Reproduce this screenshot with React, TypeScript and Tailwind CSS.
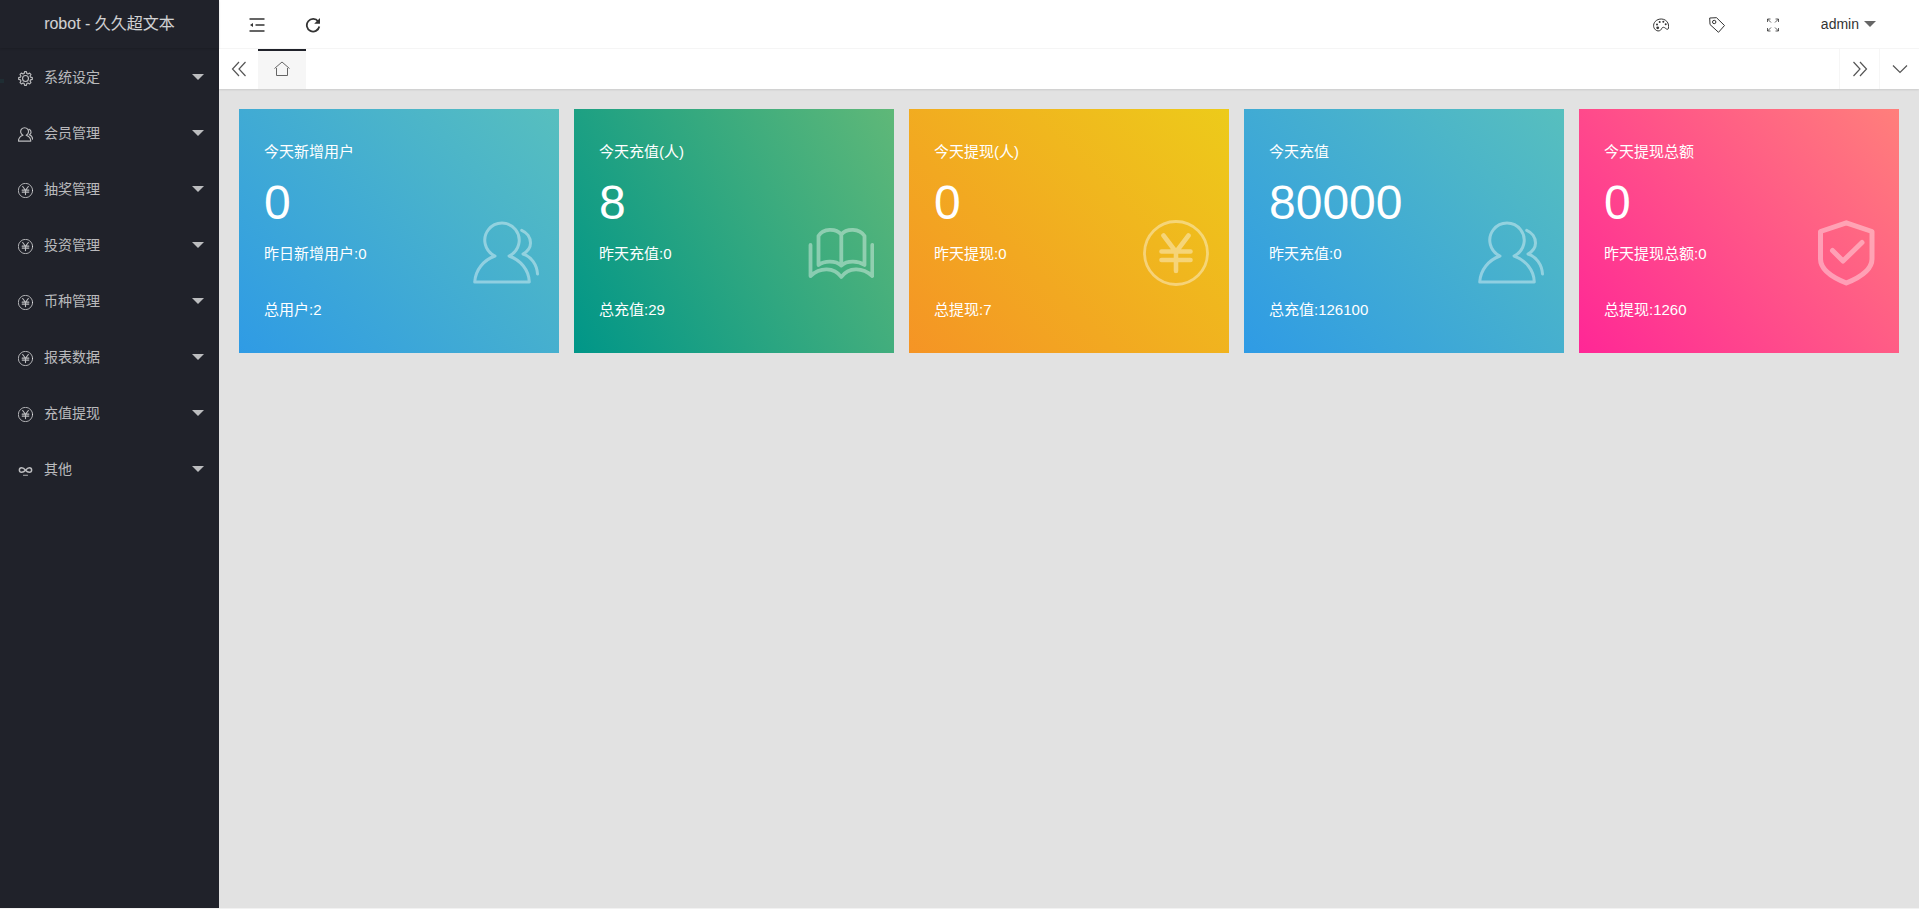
import { useState } from "react";
import type { ReactNode } from "react";

type IconName = "gear" | "users" | "yen" | "link" | "book" | "shield";

interface MenuItem {
  title: string;
  icon: IconName;
}

interface StatCard {
  title: string;
  value: string;
  previous: string;
  total: string;
  icon: IconName;
  gradient: string;
}

const menu: MenuItem[] = [
  { title: "系统设定", icon: "gear" },
  { title: "会员管理", icon: "users" },
  { title: "抽奖管理", icon: "yen" },
  { title: "投资管理", icon: "yen" },
  { title: "币种管理", icon: "yen" },
  { title: "报表数据", icon: "yen" },
  { title: "充值提现", icon: "yen" },
  { title: "其他", icon: "link" },
];

const cards: StatCard[] = [
  {
    title: "今天新增用户",
    value: "0",
    previous: "昨日新增用户:0",
    total: "总用户:2",
    icon: "users",
    gradient: "bg-[linear-gradient(45deg,#2f9be5,#57bfbe)]",
  },
  {
    title: "今天充值(人)",
    value: "8",
    previous: "昨天充值:0",
    total: "总充值:29",
    icon: "book",
    gradient: "bg-[linear-gradient(60deg,#009688,#5fb878)]",
  },
  {
    title: "今天提现(人)",
    value: "0",
    previous: "昨天提现:0",
    total: "总提现:7",
    icon: "yen",
    gradient: "bg-[linear-gradient(45deg,#f59425,#edcb1a)]",
  },
  {
    title: "今天充值",
    value: "80000",
    previous: "昨天充值:0",
    total: "总充值:126100",
    icon: "users",
    gradient: "bg-[linear-gradient(45deg,#2f9be5,#57bfbe)]",
  },
  {
    title: "今天提现总额",
    value: "0",
    previous: "昨天提现总额:0",
    total: "总提现:1260",
    icon: "shield",
    gradient: "bg-[linear-gradient(50deg,#ff2796,#ff7f7b)]",
  },
];

// All of these are drawn on a 66x66 grid
const shapes: Record<IconName, ReactNode> = {
  users: (
    <g strokeWidth="3">
      <path d="M22 36A17.200 17.200 0 1 1 36 36C47.500 40 56 50 56.300 62H1.700C2.500 50 10.500 40 22 36Z" />
      <path d="M48.700 10.300C54 12.500 57.500 17.500 57.500 23C57.500 27.500 54.500 31.500 50 34C58 36.500 64 44.500 64.500 54" />
    </g>
  ),
  book: (
    <g strokeWidth="3.800">
      <path d="M2.500 25V56C12 47 26 47 33.300 57C40.500 47 54.500 47 64.300 56V25" />
      <path d="M33.300 14.500C28 8 15 8 10.500 16V45C16 41 27 40 33.300 45.500C39.500 40 50.500 41 56.500 45V16C51.500 8 38.500 8 33.300 14.500V45" />
    </g>
  ),
  yen: (
    <>
      <circle cx="33" cy="33" r="31.500" strokeWidth="2.800" />
      <path d="M20.500 15.500L33 32L45.500 15.500M33 32V51M18.500 31.500H47.500M18.500 40H47.500" strokeWidth="4.600" />
    </>
  ),
  shield: (
    <g strokeWidth="5">
      <path d="M33.300 2.800L59 11.500V39C59 50 47 57.500 33.300 63C19.500 57.500 7.500 50 7.500 39V11.500Z" />
      <path d="M19.500 30.500L30 41L49 22.500" />
    </g>
  ),
  gear: (
    <g strokeWidth="5">
      <path d="M27 11L29 3H37L39 11L44 13L51 9L57 15L53 22L55 27L63 29V37L55 39L53 44L57 51L51 57L44 53L39 55L37 63H29L27 55L22 53L15 57L9 51L13 44L11 39L3 37V29L11 27L13 22L9 15L15 9L22 13Z" />
      <circle cx="33" cy="33" r="13" />
    </g>
  ),
  link: (
    <g strokeWidth="6.500">
      <path d="M33 32C28 25 23 21 16 21A10 10 0 0 0 16 41C24 41 28 38 33 32C38 26 42 21 50 21A10 10 0 0 1 50 41C43 41 38 38 33 32Z" />
      <path d="M24 54H42" strokeWidth="4" />
    </g>
  ),
};

// thin outlines need a heavier stroke at menu size
const menuStroke: Partial<Record<IconName, string>> = {
  users: "[&_path]:stroke-[5]",
  yen: "[&_circle]:stroke-[4] [&_path]:stroke-[5]",
};

function Icon({ name, className }: { name: IconName; className: string }) {
  return (
    <svg
      viewBox="0 0 66 66"
      fill="none"
      stroke="currentColor"
      strokeLinecap="round"
      strokeLinejoin="round"
      className={className}
      aria-hidden="true"
    >
      {shapes[name]}
    </svg>
  );
}

function Caret({ className }: { className: string }) {
  return (
    <svg viewBox="0 0 12 6" className={`h-1.5 w-3 fill-current ${className}`} aria-hidden="true">
      <path d="M0 0H12L6 6Z" />
    </svg>
  );
}

function Sidebar() {
  return (
    <aside className="relative w-[219px] shrink-0 bg-[#20222a]">
      <h1 className="h-12 text-center text-base leading-12 text-white/80 shadow-[0_1px_2px_0_rgba(0,0,0,0.15)]">
        robot - 久久超文本
      </h1>
      <span className="absolute top-[79px] left-0 h-1 w-1 bg-[#1f2d33]" />
      <nav className="pt-px">
        <ul>
          {menu.map((item) => (
            <li key={item.title}>
              <button className="flex h-14 w-full items-center pr-[15px] pl-[18px] text-sm text-white/70 hover:text-white">
                <Icon
                  name={item.icon}
                  className={`mt-0.5 mr-[11px] size-[15px] ${menuStroke[item.icon] ?? ""}`}
                />
                {item.title}
                <Caret className="ml-auto" />
              </button>
            </li>
          ))}
        </ul>
      </nav>
    </aside>
  );
}

function HeaderButton({ label, children, onClick }: { label: string; children: ReactNode; onClick?: () => void }) {
  return (
    <button
      aria-label={label}
      onClick={onClick}
      className="flex h-12 w-14 items-center justify-center text-[#333]"
    >
      <svg viewBox="0 0 16 16" fill="none" stroke="currentColor" className="mt-0.5 size-4">
        {children}
      </svg>
    </button>
  );
}

function Header({ onToggle }: { onToggle: () => void }) {
  return (
    <header className="flex h-[49px] justify-between border-b border-[#f6f6f6] bg-white px-2.5">
      <div className="flex">
        <HeaderButton label="侧边伸缩" onClick={onToggle}>
          <path d="M0.500 2H15.500M6.500 8H15.500M0.500 14H15.500" strokeWidth="1.500" />
          <path d="M1 8L4 6V10Z" fill="currentColor" stroke="none" />
        </HeaderButton>
        <HeaderButton label="刷新">
          <path d="M13.200 4.500A6.300 6.300 0 1 0 14.300 9.500" strokeWidth="1.800" />
          <path d="M15 1V6.800H9.200Z" fill="currentColor" stroke="none" />
        </HeaderButton>
      </div>
      <div className="flex pr-[13px]">
        <HeaderButton label="主题">
          <path d="M2.500 12.800C-0.300 10.500 0 6 3.300 3.500C7.500 0.500 14.500 2 15.500 8C15.800 10.500 15.500 12.300 14.500 12.300C13 12.300 12 10.300 10.500 10.300C8.500 10.300 9 12 7.500 13.200C6 14.300 4 14.200 2.500 12.800Z" />
          <g fill="currentColor" stroke="none">
            <circle cx="4" cy="7.500" r="1" />
            <circle cx="6.700" cy="4.900" r="1" />
            <circle cx="10.300" cy="4.700" r="1" />
            <circle cx="12.700" cy="7.300" r="1" />
            <circle cx="4.700" cy="10.800" r="1.400" />
          </g>
        </HeaderButton>
        <HeaderButton label="便签">
          <path d="M0.700 1L7.500 0.700L15.500 8.500L9.500 15.300L1 7.500Z" strokeLinejoin="round" />
          <circle cx="5.200" cy="5" r="1.700" />
        </HeaderButton>
        <HeaderButton label="全屏">
          <path
            d="M2.500 5V2H5.500M2.500 2L6 5.500M10.500 2H13.500V5M13.500 2L10 5.500M2.500 11V14H5.500M2.500 14L6 10.500M10.500 14H13.500V11M13.500 14L10 10.500"
            strokeWidth="0.800"
          />
        </HeaderButton>
        <button className="flex h-12 items-center gap-[5px] px-5 text-sm text-[#333]">
          admin
          <Caret className="text-[#666]" />
        </button>
      </div>
    </header>
  );
}

function TabButton({ label, className, children }: { label: string; className: string; children: ReactNode }) {
  return (
    <button aria-label={label} className={`flex h-10 items-center justify-center text-[#555] ${className}`}>
      <svg viewBox="0 0 16 16" fill="none" stroke="currentColor" className="size-4">
        {children}
      </svg>
    </button>
  );
}

function TabBar() {
  return (
    <div className="relative flex h-10 bg-white shadow-[0_1px_2px_0_rgba(0,0,0,0.1)]">
      <TabButton label="向左" className="w-[39px]">
        <path d="M8 1L1.500 8L8 15M14.500 1L8 8L14.500 15" strokeWidth="1.200" />
      </TabButton>
      <TabButton label="主页" className="w-12 border-t-2 border-[#20222a] bg-[#f6f6f6] pb-0.5">
        <path d="M0.500 7.500L8 1L15.500 7.500M2.500 7V14.500H13.500V7" strokeWidth="0.900" />
      </TabButton>
      <TabButton label="向右" className="ml-auto w-10 border-l border-[#f6f6f6]">
        <path d="M1.500 1L8 8L1.500 15M8 1L14.500 8L8 15" strokeWidth="1.200" />
      </TabButton>
      <TabButton label="标签操作" className="w-10 border-l border-[#f6f6f6]">
        <path d="M1 4.500L8 11.500L15 4.500" strokeWidth="1.200" />
      </TabButton>
    </div>
  );
}

function Card({ card }: { card: StatCard }) {
  return (
    <section className={`flex justify-between pr-5 pb-[29px] pl-[25px] text-[15px] leading-7 text-white ${card.gradient}`}>
      <div className="pt-[29px]">
        <h2>{card.title}</h2>
        <p className="mt-2 text-5xl leading-[58px]">{card.value}</p>
        <p className="mt-2">{card.previous}</p>
        <p className="mt-7">{card.total}</p>
      </div>
      <Icon name={card.icon} className="mt-[111px] size-[66px] text-white/40" />
    </section>
  );
}

export default function App() {
  const [collapsed, setCollapsed] = useState(false);

  return (
    <div className="flex min-h-screen bg-[#f2f2f2] pb-px font-['Liberation_Sans','Noto_Sans_CJK_SC',sans-serif]">
      {!collapsed && <Sidebar />}
      <div className="flex min-w-0 flex-1 flex-col bg-[#e2e2e2]">
        <Header onToggle={() => setCollapsed(!collapsed)} />
        <TabBar />
        <main className="grid grid-cols-5 gap-[15px] p-5">
          {cards.map((card) => (
            <Card key={card.title} card={card} />
          ))}
        </main>
      </div>
    </div>
  );
}
